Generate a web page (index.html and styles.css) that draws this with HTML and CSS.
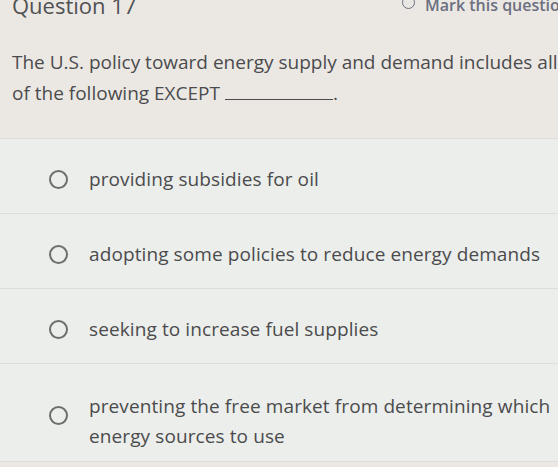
FILE: index.html
```
<!DOCTYPE html>
<html lang="en">
<head>
    <meta charset="UTF-8">
    <meta name="viewport" content="width=device-width, initial-scale=1.0">
    <title>Question 17</title>
    <link rel="stylesheet" href="styles.css">
</head>
<body>
    <header class="top">
        <h2 class="q-title">Question 17</h2>
        <span class="mark"><span class="mark-ring"></span>Mark this question</span>
    </header>

    <p class="stem">
        The U.S. policy toward energy supply and demand includes all<br>
        of the following EXCEPT <span class="blank"></span>.
    </p>

    <ul class="choices">
        <li class="choice"><span class="radio"></span><span class="label">providing subsidies for oil</span></li>
        <li class="choice"><span class="radio"></span><span class="label">adopting some policies to reduce energy demands</span></li>
        <li class="choice"><span class="radio"></span><span class="label">seeking to increase fuel supplies</span></li>
        <li class="choice two-line"><span class="radio"></span><span class="label">preventing the free market from determining which<br>energy sources to use</span></li>
    </ul>
</body>
</html>
```

FILE: styles.css
```
body {
    margin: 0;
    font-family: "Open Sans", "Liberation Sans", sans-serif;
    background: #ebe8e4;
    color: #4b4b4d;
    overflow: hidden;
}
.top {
    display: grid;
    grid-template-columns: 390px 1fr;
    align-items: center;
    height: 18px;
    padding-left: 12px;
    white-space: nowrap;
    overflow: hidden;
}
.q-title {
    margin: -10px 0 0;
    font-size: 22px;
    font-weight: 400;
    color: #505052;
}
.mark {
    display: flex;
    align-items: center;
    gap: 10px;
    margin-top: -11px;
    font-size: 16px;
    font-weight: 600;
    color: #6c6f80;
}
.mark-ring {
    flex: none;
    width: 11px;
    height: 11px;
    border: 1.5px solid #6c6f80;
    border-radius: 50%;
    margin-top: -4px;
}
.stem {
    margin: 29px 0 0;
    padding-left: 12px;
    font-size: 19px;
    line-height: 31px;
    white-space: nowrap;
}
.blank {
    display: inline-block;
    width: 108px;
    border-bottom: 1px solid #4b4b4d;
}
.choices {
    list-style: none;
    margin: 29px 0 0;
    padding: 0;
    background: #eceeeb;
}
.choice {
    display: flex;
    align-items: center;
    gap: 21px;
    min-height: 75px;
    padding: 6px 0 0 49px;
    box-sizing: border-box;
    border-top: 1px solid #dcdedb;
    font-size: 19px;
    letter-spacing: 0.1px;
    line-height: 30px;
    white-space: nowrap;
}
.two-line {
    min-height: 99px;
    border-bottom: 1px solid #dcdedb;
}
.two-line .label {
    padding-top: 10px;
}
.radio {
    flex: none;
    width: 15px;
    height: 15px;
    border: 2px solid #6e6e6e;
    border-radius: 50%;
}
```
